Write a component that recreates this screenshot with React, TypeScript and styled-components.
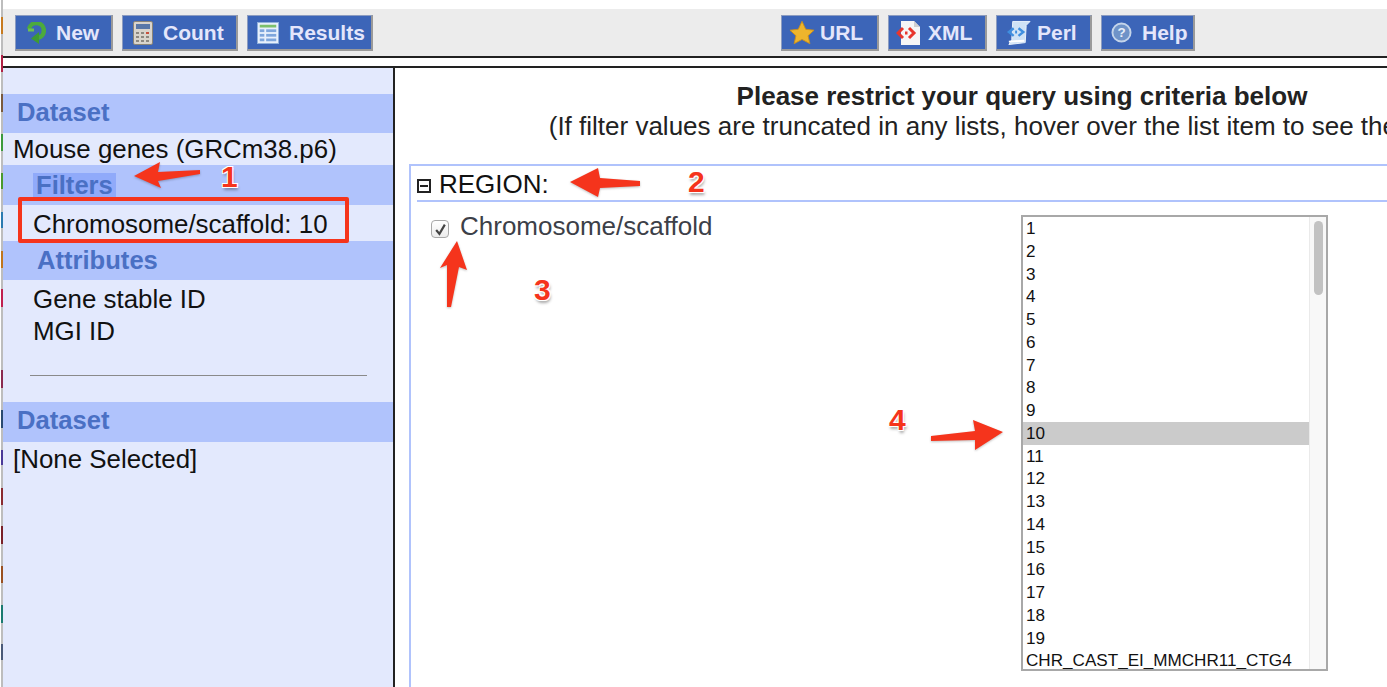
import React from "react";
import styled, { createGlobalStyle } from "styled-components";

const GlobalStyle = createGlobalStyle`
  html, body {
    margin: 0;
    padding: 0;
    background: #fff;
    overflow: hidden;
  }
  * {
    box-sizing: border-box;
  }
`;

// little coloured ticks down the left edge of the window: [from, to, colour]
const edgeMarks: [number, number, string][] = [
  [17, 34, "#c77a1e"],
  [55, 72, "#b02045"],
  [94, 112, "#7a5a3c"],
  [134, 151, "#3c9a3c"],
  [173, 189, "#4a9a2c"],
  [212, 228, "#2a7ab0"],
  [251, 268, "#c0761c"],
  [289, 307, "#c02050"],
  [370, 388, "#8a2a50"],
  [410, 428, "#2a4a70"],
  [450, 465, "#4a3a98"],
  [488, 505, "#8a2a30"],
  [526, 544, "#7a2028"],
  [566, 583, "#9a5020"],
  [605, 623, "#1a7a70"],
  [644, 660, "#4a5a78"],
];

const edgeStops = edgeMarks
  .map(([from, to, colour]) => `#bdbdbd ${from}px, ${colour} ${from}px ${to}px, #bdbdbd ${to}px`)
  .join(", ");

const Page = styled.div`
  position: relative;
  width: 1387px;
  height: 687px;
  overflow: hidden;
  background: #fff;
  font-family: "Liberation Sans", Arial, sans-serif;
  color: #111;
  display: flex;
`;

const EdgeStrip = styled.div`
  flex: 0 0 3px;
  background: linear-gradient(to bottom, ${edgeStops}) no-repeat right top / 2px 100%;
`;

const Content = styled.div`
  flex: 1;
  min-width: 0;
  display: flex;
  flex-direction: column;
`;

const TopGap = styled.div`
  height: 9px;
`;

const Toolbar = styled.div`
  height: 49px;
  padding: 6px 0 0 12px;
  background: #ececec;
  border-bottom: 2px solid #222;
  display: flex;
  align-items: flex-start;
`;

const ButtonGroup = styled.div<{ $offset?: number }>`
  display: flex;
  gap: 9px;
  margin-left: ${(p) => p.$offset || 0}px;
`;

const ToolButton = styled.div<{ $width: number; $pad: number; $gap: number }>`
  width: ${(p) => p.$width}px;
  height: 36px;
  padding-left: ${(p) => p.$pad}px;
  display: flex;
  align-items: center;
  gap: ${(p) => p.$gap}px;
  background: #3c65b8;
  border-right: 2px solid #9a9a9a;
  border-bottom: 2px solid #9a9a9a;
  border-top: 1px solid #8c9cc0;
  border-left: 1px solid #8c9cc0;
  color: #e4e6fb;
  font-size: 21px;
  font-weight: 700;
`;

const Spacer = styled.div`
  height: 8px;
  background: #fff;
  border-bottom: 2px solid #222;
  box-sizing: content-box;
`;

const Body = styled.div`
  flex: 1;
  min-height: 0;
  display: flex;
`;

const Sidebar = styled.div`
  flex: 0 0 390px;
  background: #e3e9fd;
  padding-top: 26px;
`;

const SideHeading = styled.div<{ $height: number; $indent: number; $lift: number }>`
  height: ${(p) => p.$height}px;
  padding-left: ${(p) => p.$indent}px;
  padding-bottom: ${(p) => p.$lift}px;
  background: #b0c3fc;
  color: #4a70c4;
  font-size: 25.6px;
  font-weight: 700;
  display: flex;
  align-items: center;
`;

const HighlightedLabel = styled.span`
  background: #90aafa;
  padding: 0 3px;
  line-height: 25px;
`;

const SideRow = styled.div<{ $height: number; $indent: number; $drop?: number }>`
  height: ${(p) => p.$height}px;
  padding-left: ${(p) => p.$indent}px;
  padding-top: ${(p) => p.$drop || 0}px;
  font-size: 25.9px;
  color: #111;
  display: flex;
  align-items: center;
`;

const SideRule = styled.div`
  height: 1px;
  margin: 31px 26px 26px 27px;
  background: #8a8a8a;
`;

const Main = styled.div`
  flex: 1;
  min-width: 0;
  border-left: 2px solid #222;
  overflow: hidden;
  background: #fff;
`;

const Title = styled.div`
  width: 1254px;
  margin-top: 13px;
  text-align: center;
  font-size: 26px;
  font-weight: 700;
  line-height: 30px;
  color: #222;
`;

const Subtitle = styled.div`
  width: 1254px;
  text-align: center;
  font-size: 26px;
  line-height: 30px;
  color: #222;
  white-space: nowrap;
`;

const RegionPanel = styled.div`
  width: 1100px;
  height: 700px;
  margin: 23px 0 0 14px;
  border-left: 2px solid #b0c3fc;
  border-top: 2px solid #b0c3fc;
  padding-left: 6px;
`;

const RegionHeader = styled.div`
  height: 36px;
  padding-top: 2px;
  border-bottom: 2px solid #b0c3fc;
  display: flex;
  align-items: center;
  gap: 8px;
  font-size: 26px;
  color: #111;
`;

const Collapse = styled.span`
  width: 14px;
  height: 14px;
  border: 2px solid #222;
  display: flex;
  align-items: center;
  justify-content: center;
  margin-top: 3px;
  &::before {
    content: "";
    width: 8px;
    height: 2px;
    background: #222;
  }
`;

const RegionBody = styled.div`
  display: flex;
  align-items: flex-start;
  padding: 13px 0 0 14px;
`;

const FilterOption = styled.div`
  width: 590px;
  display: flex;
  align-items: flex-start;
  gap: 11px;
  font-size: 26px;
  color: #3c4048;
  line-height: 22px;
`;

const CheckBox = styled.span`
  flex: 0 0 18px;
  height: 18px;
  margin-top: 5px;
  border: 1px solid #a8a8a8;
  border-radius: 4px;
  background: linear-gradient(#fff, #ececec);
  display: flex;
  align-items: center;
  justify-content: center;
`;

const ListBox = styled.div`
  width: 307px;
  height: 456px;
  border: 2px solid #a8a8a8;
  display: flex;
  overflow: hidden;
  background: #fff;
`;

const ListItems = styled.div`
  flex: 1;
  min-width: 0;
`;

const ListItem = styled.div<{ $selected?: boolean }>`
  height: 22.75px;
  line-height: 23px;
  padding-left: 3px;
  font-size: 17.1px;
  color: #111;
  white-space: nowrap;
  background: ${(p) => (p.$selected ? "#cbcbcb" : "transparent")};
`;

const ScrollTrack = styled.div`
  flex: 0 0 17px;
  background: #f8f8f8;
  border-left: 1px solid #eaeaea;
  padding: 4px 3px 0 4px;
`;

const ScrollThumb = styled.div`
  height: 74px;
  border-radius: 5px;
  background: #c2c2c2;
`;

const AnnotationBox = styled.div`
  position: absolute;
  left: 18px;
  top: 197px;
  width: 331px;
  height: 46px;
  border: 4px solid #f5341c;
  border-radius: 2px;
`;

const Callout = styled.span<{ $x: number; $y: number }>`
  position: absolute;
  left: ${(p) => p.$x}px;
  top: ${(p) => p.$y}px;
  color: #f5341c;
  font-size: 30px;
  font-weight: 700;
  line-height: 30px;
  text-shadow: 1px 1px 0 #fff, -1px -1px 0 #fff, 1px -1px 0 #fff, -1px 1px 0 #fff,
    1px 3px 3px rgba(0, 0, 0, 0.35);
`;

const ArrowLayer = styled.svg`
  position: absolute;
  left: 0;
  top: 0;
  pointer-events: none;
  filter: drop-shadow(0 1px 1px rgba(0, 0, 0, 0.25));
`;

const arrows = [
  "M134 176 L160 162 L158 172 L200 170 L200 174 L158 181 L161 188 Z",
  "M570 182 L598 168 L600 178 L640 181 L640 186 L600 188 L598 197 Z",
  "M457 241 L467 270 L459 267 L451 307 L447 307 L447 265 L440 268 Z",
  "M1003 432 L973 420 L975 431 L931 436 L931 441 L975 440 L975 450 Z",
];

const NewIcon = () => (
  <svg width="20" height="22" viewBox="0 0 20 22">
    <path d="M3 7 A7.5 7.5 0 1 1 11 16" fill="none" stroke="#4caa3c" strokeWidth="4.5" />
    <path d="M13 10 L13 22 L5 16.5 Z" fill="#3f9a34" />
    <path d="M2 8 L8 8" stroke="#6fc050" strokeWidth="3" />
  </svg>
);

const CountIcon = () => (
  <svg width="20" height="24" viewBox="0 0 20 24">
    <rect x="0.5" y="0.5" width="19" height="23" rx="1.5" fill="#d9d4cc" stroke="#8a8478" />
    <rect x="3" y="3" width="14" height="5" fill="#5a78a8" />
    <g fill="#8d8880">
      <rect x="3" y="11" width="3" height="2" />
      <rect x="8" y="11" width="3" height="2" />
      <rect x="13" y="11" width="3" height="2" fill="#c8503c" />
      <rect x="3" y="15" width="3" height="2" />
      <rect x="8" y="15" width="3" height="2" />
      <rect x="13" y="15" width="3" height="2" />
      <rect x="3" y="19" width="3" height="2" />
      <rect x="8" y="19" width="3" height="2" />
      <rect x="13" y="19" width="3" height="2" />
    </g>
  </svg>
);

const ResultsIcon = () => (
  <svg width="22" height="22" viewBox="0 0 24 24">
    <rect x="0.5" y="0.5" width="23" height="23" fill="#e8f0fc" stroke="#8fb0dc" />
    <rect x="3" y="3" width="18" height="3" fill="#7cc06c" />
    <g fill="#7ea6dc">
      <rect x="3" y="8" width="5" height="3" />
      <rect x="10" y="8" width="11" height="3" />
      <rect x="3" y="13" width="5" height="3" />
      <rect x="10" y="13" width="11" height="3" />
      <rect x="3" y="18" width="5" height="3" />
      <rect x="10" y="18" width="11" height="3" />
    </g>
  </svg>
);

const StarIcon = () => (
  <svg width="26" height="25" viewBox="0 0 28 26">
    <path d="M14 1 L18 9.5 L27 10.5 L20.5 16.5 L22.5 25 L14 20.5 L5.5 25 L7.5 16.5 L1 10.5 L10 9.5 Z" fill="#eeb52c" stroke="#c98f1c" />
  </svg>
);

const XmlIcon = () => (
  <svg width="25" height="26" viewBox="0 0 25 26">
    <path d="M5 1 L18 1 L24 7 L24 25 L5 25 Z" fill="#f6f6f6" />
    <path d="M18 1 L24 7 L18 7 Z" fill="#d0d0d0" />
    <path d="M7 8 L2 13 L7 18 M13 8 L18 13 L13 18" fill="none" stroke="#e8362c" strokeWidth="3" />
    <rect x="9" y="11.5" width="2.5" height="3" fill="#e8362c" />
  </svg>
);

const PerlIcon = () => (
  <svg width="25" height="26" viewBox="0 0 26 26">
    <path d="M7 1 L25 1 L21 5 L20 23 L3 25 L6 20 Z" fill="#cfe2f6" stroke="#eaf3fc" />
    <path d="M8 8 L3 12 L8 16 M13 8 L18 12 L13 16" fill="none" stroke="#3f8fe0" strokeWidth="2.5" />
    <rect x="9.5" y="10.5" width="2" height="3" fill="#3f8fe0" />
    <path d="M3 22 L19 21" stroke="#fff" strokeWidth="2" />
  </svg>
);

const HelpIcon = () => (
  <svg width="21" height="21" viewBox="0 0 22 22">
    <circle cx="11" cy="11" r="9.5" fill="#6f93c8" stroke="#c4d4ea" strokeWidth="2" />
    <text x="11" y="16" textAnchor="middle" fontSize="14" fontWeight="700" fontFamily="Liberation Sans" fill="#e8eef8">?</text>
  </svg>
);

const leftButtons = [
  { label: "New", width: 98, pad: 10, gap: 10, icon: <NewIcon /> },
  { label: "Count", width: 116, pad: 10, gap: 10, icon: <CountIcon /> },
  { label: "Results", width: 126, pad: 9, gap: 10, icon: <ResultsIcon /> },
];

const rightButtons = [
  { label: "URL", width: 98, pad: 7, gap: 5, icon: <StarIcon /> },
  { label: "XML", width: 99, pad: 7, gap: 7, icon: <XmlIcon /> },
  { label: "Perl", width: 96, pad: 9, gap: 6, icon: <PerlIcon /> },
  { label: "Help", width: 94, pad: 9, gap: 10, icon: <HelpIcon /> },
];

const chromosomes = [
  ...Array.from({ length: 19 }, (_, i) => String(i + 1)),
  "CHR_CAST_EI_MMCHR11_CTG4",
];

const App = () => {
  return (
    <Page>
      <GlobalStyle />
      <EdgeStrip />
      <Content>
        <TopGap />
        <Toolbar>
          <ButtonGroup>
            {leftButtons.map((b) => (
              <ToolButton key={b.label} $width={b.width} $pad={b.pad} $gap={b.gap}>
                {b.icon}
                {b.label}
              </ToolButton>
            ))}
          </ButtonGroup>
          <ButtonGroup $offset={408}>
            {rightButtons.map((b) => (
              <ToolButton key={b.label} $width={b.width} $pad={b.pad} $gap={b.gap}>
                {b.icon}
                {b.label}
              </ToolButton>
            ))}
          </ButtonGroup>
        </Toolbar>
        <Spacer />
        <Body>
          <Sidebar>
            <SideHeading $height={39} $indent={14} $lift={2}>Dataset</SideHeading>
            <SideRow $height={32} $indent={10}>Mouse genes (GRCm38.p6)</SideRow>
            <SideHeading $height={40} $indent={30} $lift={0}>
              <HighlightedLabel>Filters</HighlightedLabel>
            </SideHeading>
            <SideRow $height={36} $indent={30} $drop={2}>Chromosome/scaffold: 10</SideRow>
            <SideHeading $height={39} $indent={34} $lift={0}>Attributes</SideHeading>
            <SideRow $height={38} $indent={30}>Gene stable ID</SideRow>
            <SideRow $height={26} $indent={30}>MGI ID</SideRow>
            <SideRule />
            <SideHeading $height={40} $indent={14} $lift={4}>Dataset</SideHeading>
            <SideRow $height={35} $indent={10}>[None Selected]</SideRow>
          </Sidebar>
          <Main>
            <Title>Please restrict your query using criteria below</Title>
            <Subtitle>(If filter values are truncated in any lists, hover over the list item to see the full text)</Subtitle>
            <RegionPanel>
              <RegionHeader>
                <Collapse />
                REGION:
              </RegionHeader>
              <RegionBody>
                <FilterOption>
                  <CheckBox>
                    <svg width="13" height="13" viewBox="0 0 12 12">
                      <path d="M2 6.5 L5 10 L10 1.5" fill="none" stroke="#444" strokeWidth="2" />
                    </svg>
                  </CheckBox>
                  Chromosome/scaffold
                </FilterOption>
                <ListBox>
                  <ListItems>
                    {chromosomes.map((c) => (
                      <ListItem key={c} $selected={c === "10"}>{c}</ListItem>
                    ))}
                  </ListItems>
                  <ScrollTrack>
                    <ScrollThumb />
                  </ScrollTrack>
                </ListBox>
              </RegionBody>
            </RegionPanel>
          </Main>
        </Body>
      </Content>
      <AnnotationBox />
      <ArrowLayer width="1387" height="687" viewBox="0 0 1387 687">
        {arrows.map((d) => (
          <path key={d} d={d} fill="#f5341c" />
        ))}
      </ArrowLayer>
      <Callout $x={221} $y={162}>1</Callout>
      <Callout $x={688} $y={167}>2</Callout>
      <Callout $x={534} $y={275}>3</Callout>
      <Callout $x={889} $y={405}>4</Callout>
    </Page>
  );
};

export default App;
